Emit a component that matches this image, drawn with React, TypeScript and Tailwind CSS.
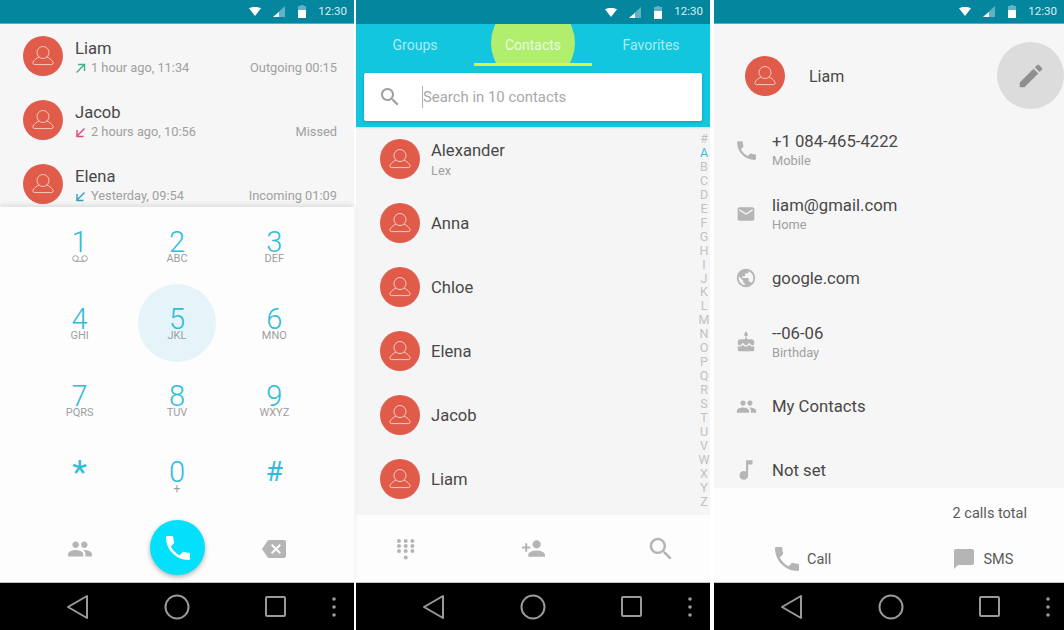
import React from "react";

const paths = {
  phone: "M6.62 10.79c1.44 2.83 3.76 5.14 6.59 6.59l2.2-2.2c.27-.27.67-.36 1.02-.24 1.12.37 2.33.57 3.57.57.55 0 1 .45 1 1V20c0 .55-.45 1-1 1-9.39 0-17-7.61-17-17 0-.55.45-1 1-1h3.5c.55 0 1 .45 1 1 0 1.25.2 2.45.57 3.57.11.35.03.74-.25 1.02l-2.2 2.2z",
  group: "M16 11c1.66 0 2.99-1.34 2.99-3S17.66 5 16 5c-1.66 0-3 1.34-3 3s1.34 3 3 3zm-8 0c1.66 0 2.99-1.34 2.99-3S9.66 5 8 5C6.34 5 5 6.34 5 8s1.34 3 3 3zm0 2c-2.33 0-7 1.17-7 3.5V19h14v-2.5c0-2.33-4.67-3.5-7-3.5zm8 0c-.29 0-.62.02-.97.05 1.16.84 1.97 1.97 1.97 3.45V19h6v-2.5c0-2.33-4.67-3.5-7-3.5z",
  backspace: "M22 3H7c-.69 0-1.23.35-1.59.88L0 12l5.41 8.11c.36.53.9.89 1.59.89h15c1.1 0 2-.9 2-2V5c0-1.1-.9-2-2-2zm-3 12.59L17.59 17 14 13.41 10.41 17 9 15.59 12.59 12 9 8.41 10.41 7 14 10.59 17.59 7 19 8.41 15.41 12 19 15.59z",
  search: "M15.5 14h-.79l-.28-.27C15.41 12.59 16 11.11 16 9.5 16 5.91 13.09 3 9.5 3S3 5.91 3 9.5 5.91 16 9.5 16c1.61 0 3.09-.59 4.23-1.57l.27.28v.79l5 4.99L20.49 19l-4.99-5zm-6 0C7.01 14 5 11.99 5 9.5S7.01 5 9.5 5 14 7.01 14 9.5 11.99 14 9.5 14z",
  personAdd: "M15 12c2.21 0 4-1.79 4-4s-1.79-4-4-4-4 1.79-4 4 1.79 4 4 4zm-9-2V7H4v3H1v2h3v3h2v-3h3v-2H6zm9 4c-2.67 0-8 1.34-8 4v2h16v-2c0-2.66-5.33-4-8-4z",
  mail: "M20 4H4c-1.1 0-1.99.9-1.99 2L2 18c0 1.1.9 2 2 2h16c1.1 0 2-.9 2-2V6c0-1.1-.9-2-2-2zm0 4l-8 5-8-5V6l8 5 8-5v2z",
  globe: "M12 2C6.48 2 2 6.48 2 12s4.48 10 10 10 10-4.48 10-10S17.52 2 12 2zm-1 17.93c-3.95-.49-7-3.85-7-7.93 0-.62.08-1.21.21-1.79L9 15v1c0 1.1.9 2 2 2v1.93zm6.9-2.54c-.26-.81-1-1.39-1.9-1.39h-1v-3c0-.55-.45-1-1-1H8v-2h2c.55 0 1-.45 1-1V7h2c1.1 0 2-.9 2-2v-.41c2.93 1.19 5 4.06 5 7.41 0 2.08-.8 3.97-2.1 5.39z",
  cake: "M12 6c1.11 0 2-.9 2-2 0-.38-.1-.73-.29-1.03L12 0l-1.71 2.97c-.19.3-.29.65-.29 1.03 0 1.1.9 2 2 2zm4.6 9.99l-1.07-1.07-1.08 1.07c-1.3 1.3-3.58 1.31-4.89 0l-1.07-1.07-1.09 1.07C6.75 16.64 5.88 17 4.96 17c-.73 0-1.4-.23-1.96-.61V21c0 .55.45 1 1 1h16c.55 0 1-.45 1-1v-4.61c-.56.38-1.23.61-1.96.61-.92 0-1.79-.36-2.44-1.01zM18 9h-5V7h-2v2H6c-1.66 0-3 1.34-3 3v1.54c0 1.08.88 1.96 1.96 1.96.52 0 1.02-.2 1.38-.57l2.14-2.13 2.13 2.13c.74.74 2.03.74 2.77 0l2.14-2.13 2.13 2.13c.37.37.86.57 1.38.57 1.08 0 1.96-.88 1.96-1.96V12C21 10.34 19.66 9 18 9z",
  music: "M12 3v10.55c-.59-.34-1.27-.55-2-.55-2.21 0-4 1.79-4 4s1.79 4 4 4 4-1.79 4-4V7h4V3h-6z",
  edit: "M3 17.25V21h3.75L17.81 9.94l-3.75-3.75L3 17.25zM20.71 7.04c.39-.39.39-1.02 0-1.41l-2.34-2.34c-.39-.39-1.02-.39-1.41 0l-1.83 1.83 3.75 3.75 1.83-1.83z",
  message: "M20 2H4c-1.1 0-1.99.9-1.99 2L2 22l4-4h14c1.1 0 2-.9 2-2V4c0-1.1-.9-2-2-2z",
};

function Icon({ name, size = 24, className = "fill-[#b5b5b5]" }: { name: keyof typeof paths; size?: number; className?: string }) {
  return (
    <svg width={size} height={size} viewBox="0 0 24 24" className={`shrink-0 ${className}`}>
      <path d={paths[name]} />
    </svg>
  );
}

function Avatar() {
  return (
    <div className="w-10 h-10 rounded-full bg-[#e15b4a] flex items-center justify-center shrink-0">
      <svg width="24" height="24" viewBox="0 0 24 24" fill="none" stroke="#f8c9bd" strokeWidth="1">
        <circle cx="12" cy="8.5" r="6" />
        <path d="M8 13c-2.5 1.2-5.5 3.2-6 5.6-.3 1.2.3 2 1.4 2h17.2c1.1 0 1.7-.8 1.4-2-.5-2.4-3.5-4.4-6-5.6" />
      </svg>
    </div>
  );
}

function StatusBar({ line = true }: { line?: boolean }) {
  return (
    <div className={`h-6 shrink-0 bg-[#04869f] flex items-center justify-end pr-[7px] ${line ? "border-b border-[#2cc0d4]" : ""}`}>
      <svg width="12" height="9" viewBox="0 0 14 10" preserveAspectRatio="none" className="fill-white mr-3">
        <path d="M0 1.5C2 .5 4.5 0 7 0s5 .5 7 1.5L7 10z" />
      </svg>
      <svg width="12" height="11" viewBox="0 0 12 11" className="mr-[13px]">
        <path d="M12 0v11H0z" fill="#5fb3c3" />
        <path d="M6 6v5H0z" fill="#ffffff" />
      </svg>
      <svg width="8" height="13" viewBox="0 0 8 13" className="mr-3">
        <path d="M2.5 0h3v1H8v4H0V1h2.5z" fill="#5fb3c3" />
        <path d="M0 5h8v8H0z" fill="#ffffff" />
      </svg>
      <span className="text-[11.5px] text-[#d8eff3]">12:30</span>
    </div>
  );
}

function NavBar() {
  return (
    <div className="shrink-0 w-[354px]">
      <div className="h-px bg-[#c4c4c4]" />
      <div className="h-[47px] bg-black flex items-center pl-[66px]">
        <svg width="23" height="26" viewBox="0 0 23 26" fill="none" stroke="#9a9a9a" strokeWidth="2" strokeLinejoin="round">
          <path d="M21 2v22L2 13z" />
        </svg>
        <svg width="26" height="26" viewBox="0 0 26 26" fill="none" stroke="#9a9a9a" strokeWidth="2" className="ml-[75px]">
          <circle cx="13" cy="13" r="11.5" />
        </svg>
        <svg width="23" height="23" viewBox="0 0 23 23" fill="none" stroke="#9a9a9a" strokeWidth="2" strokeLinejoin="round" className="ml-[74px]">
          <rect x="2" y="2" width="19" height="19" rx="1" />
        </svg>
        <svg width="4" height="20" viewBox="0 0 4 20" fill="#9a9a9a" className="ml-[45px]">
          <circle cx="2" cy="2" r="1.8" />
          <circle cx="2" cy="10" r="1.8" />
          <circle cx="2" cy="18" r="1.8" />
        </svg>
      </div>
    </div>
  );
}

function CallArrow({ type }: { type: "out" | "missed" | "in" }) {
  const color = type === "out" ? "#3cb58c" : type === "missed" ? "#e2477a" : "#2f9fc0";
  return (
    <svg width="11" height="11" viewBox="0 0 11 11" fill="none" stroke={color} strokeWidth="1.4" className="mr-[5px]">
      {type === "out" ? <path d="M1.5 9.5l8-8M3 1.5h6.5V8" /> : <path d="M9.5 1.5l-8 8M2 3v6.5h6.5" />}
    </svg>
  );
}

const calls = [
  { name: "Liam", type: "out" as const, time: "1 hour ago, 11:34", info: "Outgoing 00:15" },
  { name: "Jacob", type: "missed" as const, time: "2 hours ago, 10:56", info: "Missed" },
  { name: "Elena", type: "in" as const, time: "Yesterday, 09:54", info: "Incoming 01:09" },
];

const keys = [
  ["1", "vm"], ["2", "ABC"], ["3", "DEF"],
  ["4", "GHI"], ["5", "JKL"], ["6", "MNO"],
  ["7", "PQRS"], ["8", "TUV"], ["9", "WXYZ"],
  ["*", ""], ["0", "+"], ["#", ""],
];

function DialKey({ digit, letters }: { digit: string; letters: string }) {
  const active = digit === "5";
  return (
    <div className="h-[77px] flex items-center justify-center">
      <div className={`w-[78px] h-[78px] rounded-full flex flex-col items-center ${digit === "*" || digit === "#" || digit === "0" ? "pt-[23px]" : "pt-[24px]"} ${active ? "bg-[#e4f4f8]" : ""}`}>
        <span className={`h-[22px] leading-[22px] text-[#2fbcdb] ${digit === "*" ? "text-[34px]" : digit === "#" ? "text-[28px]" : "text-[29px] font-light"}`}>{digit}</span>
        {letters === "vm" ? (
          <svg width="16" height="7" viewBox="0 0 16 7" fill="none" stroke="#9e9e9e" strokeWidth="1" className="mt-[2px]">
            <circle cx="3.5" cy="3.5" r="2.8" />
            <circle cx="12.5" cy="3.5" r="2.8" />
            <path d="M3.5 6.3h9" />
          </svg>
        ) : (
          <span className={`text-[#9e9e9e] leading-[12px] ${letters === "+" ? "text-[12px]" : "text-[11px]"}`}>{letters}</span>
        )}
      </div>
    </div>
  );
}

function DialerPanel() {
  return (
    <div className="w-[354px] flex flex-col bg-[#f6f6f6]">
      <StatusBar />
      <div className="h-[183px] overflow-hidden">
        {calls.map((c) => (
          <div key={c.name} className="h-16 flex items-center pl-[23px] pr-[17px]">
            <Avatar />
            <div className="ml-3 flex-1 mt-1">
              <div className="text-[16.6px] leading-[20px] text-[#484848]">{c.name}</div>
              <div className="flex items-center justify-between text-[12.8px] leading-[18px] text-[#a0a0a0]">
                <div className="flex items-center">
                  <CallArrow type={c.type} />
                  <span>{c.time}</span>
                </div>
                <span>{c.info}</span>
              </div>
            </div>
          </div>
        ))}
      </div>
      <div className="relative flex-1 bg-[#fdfdfd] shadow-[0_-2px_5px_rgba(0,0,0,0.1)]">
        <div className="grid grid-cols-3 px-[31px]">
          {keys.map(([d, l]) => (
            <DialKey key={d} digit={d} letters={l} />
          ))}
        </div>
        <div className="h-[67px] grid grid-cols-3 items-center justify-items-center px-[31px]">
          <Icon name="group" size={26} />
          <div className="w-[55px] h-[55px] rounded-full bg-[#03e0fc] shadow-[0_2px_5px_rgba(0,0,0,0.3)] flex items-center justify-center mb-[2px] ml-[2px]">
            <Icon name="phone" size={32} className="fill-white" />
          </div>
          <Icon name="backspace" size={24} />
        </div>
      </div>
      <NavBar />
    </div>
  );
}

const contacts = [
  { name: "Alexander", sub: "Lex" },
  { name: "Anna" },
  { name: "Chloe" },
  { name: "Elena" },
  { name: "Jacob" },
  { name: "Liam" },
];

const letters = "#ABCDEFGHIJKLMNOPQRSTUVWXYZ".split("");

function ContactsPanel() {
  return (
    <div className="w-[354px] flex flex-col bg-[#f5f5f5]">
      <StatusBar line={false} />
      <div className="h-[103px] bg-[#12c6de] shadow-[0_1px_2px_rgba(0,0,0,0.1)] shrink-0">
        <div className="relative h-[42px] flex text-[14px] text-[#a9ecf4] overflow-hidden">
          <div className="absolute left-[135px] top-[-23px] w-[84px] h-[84px] rounded-full bg-[#b2ee6e]" />
          <div className="absolute left-[118px] top-[39px] w-[118px] h-[3px] bg-[#dcf53f]" />
          <div className="relative w-[118px] text-center leading-[43px]">Groups</div>
          <div className="relative w-[118px] text-center leading-[43px] text-[#e6fbe0]">Contacts</div>
          <div className="relative w-[118px] text-center leading-[43px]">Favorites</div>
        </div>
        <div className="mx-2 mt-[7px] h-[48px] bg-white rounded-[2px] shadow-[0_1px_3px_rgba(0,0,0,0.2)] flex items-center pl-[14px]">
          <Icon name="search" size={24} className="fill-[#9e9e9e]" />
          <div className="ml-[20px] h-[22px] w-px bg-[#b0b0b0]" />
          <span className="text-[14.9px] text-[#a8a8a8]">Search in 10 contacts</span>
        </div>
      </div>
      <div className="relative flex-1">
        {contacts.map((c) => (
          <div key={c.name} className="h-16 flex items-center pl-6">
            <Avatar />
            <div className="ml-[11px] pt-[2px]">
              <div className="text-[16.6px] leading-[20px] text-[#484848]">{c.name}</div>
              {c.sub && <div className="text-[12.8px] leading-[18px] text-[#a0a0a0] mt-[1px]">{c.sub}</div>}
            </div>
          </div>
        ))}
        <div className="absolute right-0 top-[5px] w-3 flex flex-col items-center">
          {letters.map((l) => (
            <span key={l} className={`h-[13.96px] leading-[14px] text-[12.5px] ${l === "A" ? "text-[#35bfdc]" : "text-[#c2c2c2]"}`}>{l}</span>
          ))}
        </div>
      </div>
      <div className="h-[67px] shrink-0 bg-[#fdfdfd] flex items-center pl-[41px]">
        <svg width="18" height="22" viewBox="0 0 18 22" fill="#b5b5b5" className="mt-[3px]">
          {[2, 7, 12].flatMap((y) =>
            [2, 8.7, 15.4].map((x) => <circle key={`${x}-${y}`} cx={x} cy={y} r="2" />)
          )}
          <circle cx="8.7" cy="18.5" r="2" />
        </svg>
        <div className="ml-[106px]"><Icon name="personAdd" size={25} /></div>
        <div className="ml-[100px]"><Icon name="search" size={30} /></div>
      </div>
      <NavBar />
    </div>
  );
}

const details = [
  { icon: "phone" as const, size: 25, title: "+1 084-465-4222", sub: "Mobile" },
  { icon: "mail" as const, size: 20, title: "liam@gmail.com", sub: "Home" },
  { icon: "globe" as const, size: 22, title: "google.com" },
  { icon: "cake" as const, size: 22, title: "--06-06", sub: "Birthday" },
  { icon: "group" as const, size: 21, title: "My Contacts" },
  { icon: "music" as const, size: 26, title: "Not set" },
];

function DetailPanel() {
  return (
    <div className="w-[350px] flex flex-col bg-[#f6f6f6] overflow-hidden">
      <StatusBar />
      <div className="relative h-[94px] shrink-0 flex items-center pl-[31px] pt-[10px]">
        <Avatar />
        <span className="ml-6 pt-[2px] text-[16px] text-[#484848]">Liam</span>
        <div className="absolute left-[283px] top-[18px] w-[67px] h-[67px] rounded-full bg-[#dcdcdc] flex items-center justify-center">
          <Icon name="edit" size={30} className="fill-[#8f8f8f]" />
        </div>
      </div>
      <div className="h-[370px] overflow-hidden">
        {details.map((d) => (
          <div key={d.title} className="h-16 flex items-center">
            <div className="w-[58px] pl-[6px] flex justify-center"><Icon name={d.icon} size={d.size} /></div>
            <div className="pt-[2px]">
              <div className="text-[16.7px] leading-[20px] text-[#484848]">{d.title}</div>
              {d.sub && <div className="text-[12.8px] leading-[18px] text-[#a0a0a0]">{d.sub}</div>}
            </div>
          </div>
        ))}
      </div>
      <div className="flex-1 bg-[#fdfdfd] flex flex-col">
        <div className="h-[48px] pt-[3px] flex items-center justify-end pr-[37px] text-[14.5px] text-[#5a5a5a]">2 calls total</div>
        <div className="flex-1 flex items-center text-[14.5px] text-[#5a5a5a]">
          <div className="ml-[57px] flex items-center">
            <Icon name="phone" size={32} />
            <span className="ml-[4px] mt-[2px]">Call</span>
          </div>
          <div className="ml-[121px] flex items-center">
            <Icon name="message" size={24} />
            <span className="ml-[7px] mt-[2px]">SMS</span>
          </div>
        </div>
      </div>
      <NavBar />
    </div>
  );
}

export default function App() {
  return (
    <div className="w-[1064px] h-[630px] bg-white flex overflow-hidden font-['Roboto',sans-serif]">
      <DialerPanel />
      <div className="w-[2px]" />
      <ContactsPanel />
      <div className="w-[4px]" />
      <DetailPanel />
    </div>
  );
}
